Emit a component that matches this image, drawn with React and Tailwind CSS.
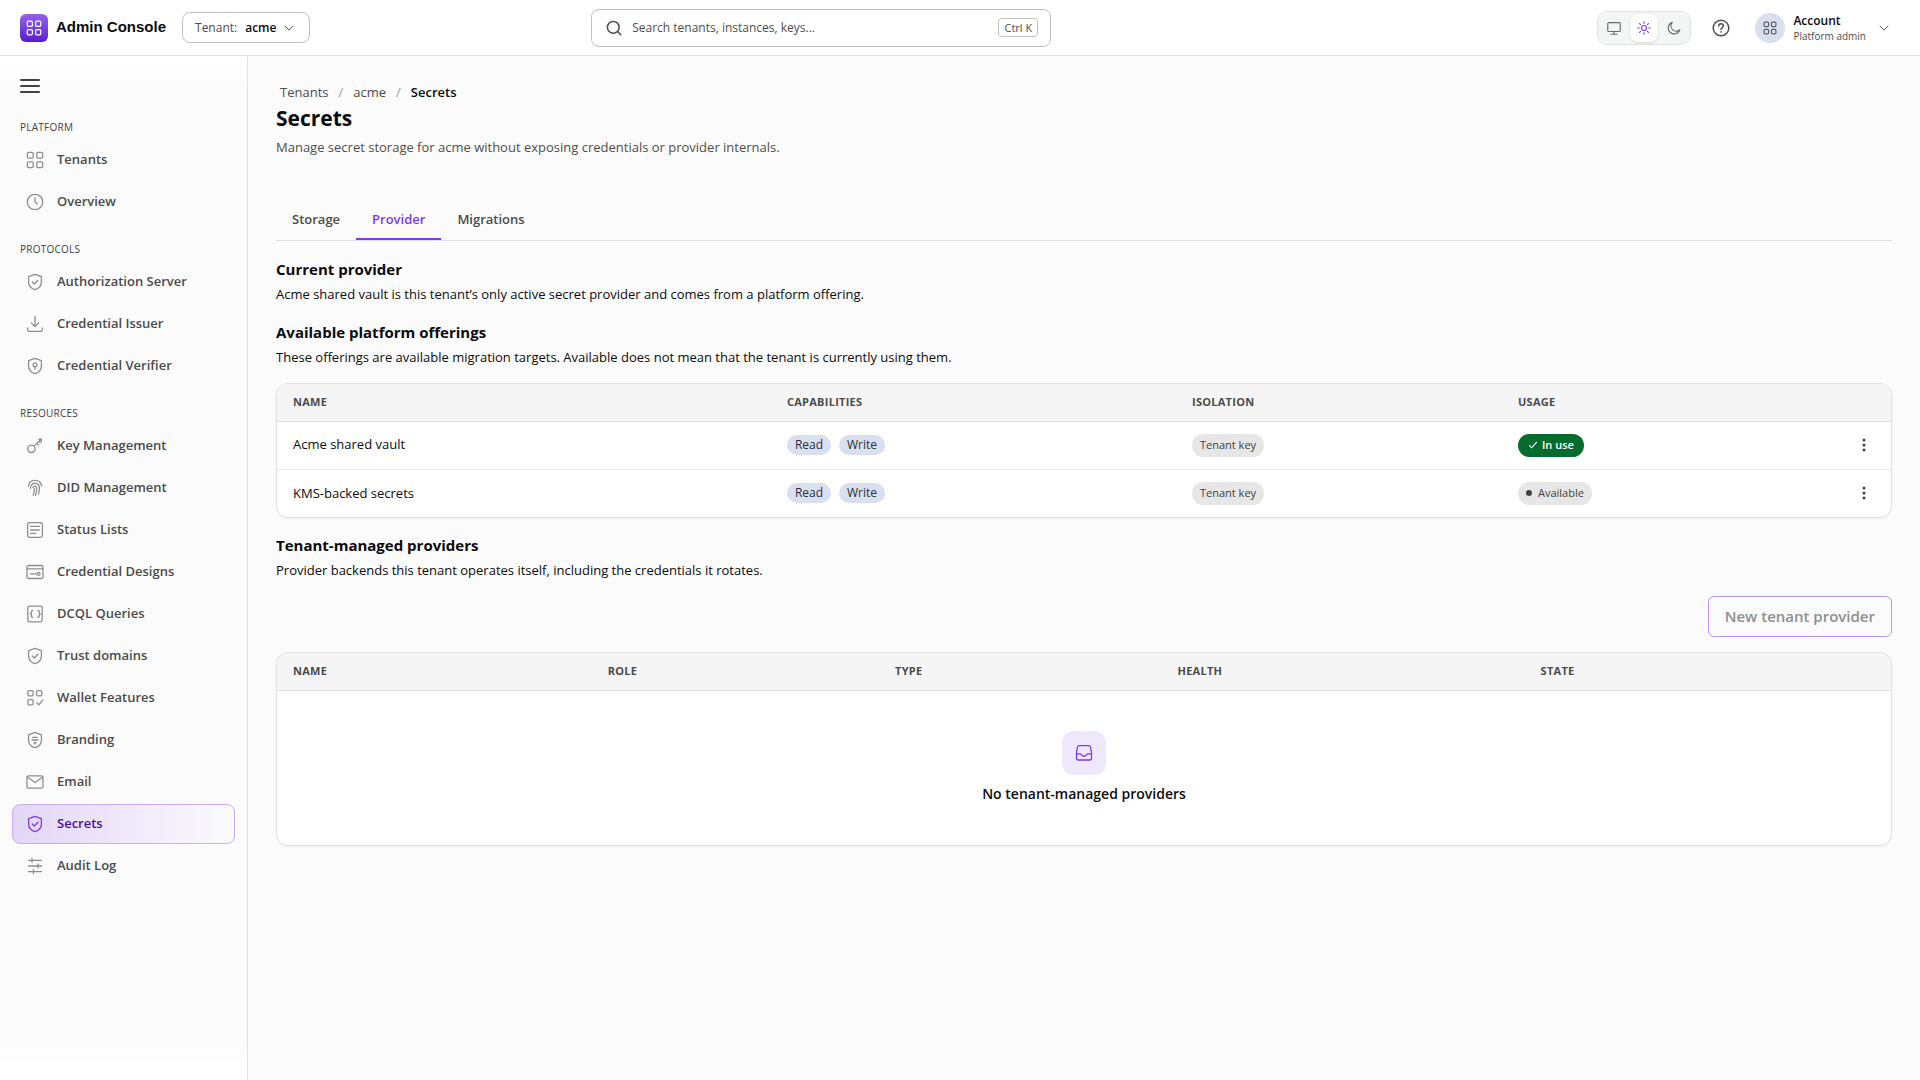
import React, { useState } from "react";

const icons = {
  grid: (
    <>
      <rect x="1.4" y="1.4" width="5.8" height="5.8" rx="1.4" />
      <rect x="10.8" y="1.4" width="5.8" height="5.8" rx="1.4" />
      <rect x="1.4" y="10.8" width="5.8" height="5.8" rx="1.4" />
      <rect x="10.8" y="10.8" width="5.8" height="5.8" rx="1.4" />
    </>
  ),
  clock: (
    <>
      <circle cx="9" cy="9" r="7.7" />
      <path d="M9 4.6V9l2.4 1.8" />
    </>
  ),
  shieldCheck: (
    <>
      <path d="M9 1.3 15.4 3.6V9c0 3.8-2.7 6.5-6.4 7.7C5.3 15.5 2.6 12.8 2.6 9V3.6Z" />
      <path d="m6.3 9 2 2 3.6-3.7" />
    </>
  ),
  download: (
    <>
      <path d="M9 1.5v10M5.4 8 9 11.6 12.6 8" />
      <path d="M1.7 13v1.7c0 1.1.6 1.6 1.6 1.6h11.4c1 0 1.6-.5 1.6-1.6V13" />
    </>
  ),
  shieldKey: (
    <>
      <path d="M9 1.3 15.4 3.6V9c0 3.8-2.7 6.5-6.4 7.7C5.3 15.5 2.6 12.8 2.6 9V3.6Z" />
      <circle cx="9" cy="7.8" r="1.9" />
      <path d="M9 9.8v2.4" />
    </>
  ),
  key: (
    <>
      <circle cx="5.4" cy="11.8" r="3.7" />
      <path d="m8.1 9.1 6.8-6.7M12.8 2.2h2.6v2.6M11 6.2l1.5 1.5M13 4.3l1.3 1.3" />
    </>
  ),
  fingerprint: (
    <>
      <path d="M2.4 7C3 3.600 5.600 1.300 9 1.300s6 2.300 6.600 5.700" />
      <path d="M4.300 9.400C4.600 6.200 6.300 4.300 9 4.300c2.700 0 4.400 1.900 4.400 4.700 0 2.300-.3 4.100-.9 6" />
      <path d="M7 8.500c.1-.9.900-1.400 1.900-1.400 1.200 0 1.800.8 1.800 2 0 2.900-.4 5.100-1.200 7.400M8.300 9.500c.2 2.500-.2 4.700-1.200 6.700" />
    </>
  ),
  list: (
    <>
      <rect x="1.6" y="1.6" width="14.8" height="14.8" rx="1.8" />
      <path d="M4.6 5.4h8.8M4.6 9h8.8M4.6 12.4h5.4" />
    </>
  ),
  card: (
    <>
      <rect x="1" y="2.5" width="16" height="13" rx="1.8" />
      <path d="M1 5.8h16M4.5 10.8h5.5" />
      <circle cx="12.5" cy="10.8" r="1.5" />
    </>
  ),
  braces: (
    <>
      <rect x="1.8" y="1.2" width="14.4" height="15.6" rx="1.8" />
      <path d="M6.7 5.5c-1 0-1.3.5-1.3 1.4v.8c0 .8-.3 1.2-1 1.3.7.1 1 .5 1 1.3v.8c0 .9.3 1.4 1.3 1.4M12 5.5c1 0 1.3.5 1.3 1.4v.8c0 .8.3 1.2 1 1.3-.7.1-1 .5-1 1.3v.8c0 .9-.3 1.4-1.3 1.4" />
    </>
  ),
  features: (
    <>
      <rect x="1.9" y="1.6" width="5.2" height="5.2" rx="1.3" />
      <rect x="10.6" y="1.6" width="5.2" height="5.2" rx="1.3" />
      <rect x="1.9" y="10.6" width="5.2" height="5.2" rx="1.3" />
      <path d="m10.7 13.8 2 2 4.2-4.9" />
    </>
  ),
  badge: (
    <>
      <path d="M9 1.3 15.4 3.9V9.4c0 3.6-2.7 6.2-6.4 7.3C5.3 15.6 2.6 13 2.6 9.4V3.9Z" />
      <path d="M6.6 6.3h4.800M6 9h6M8 12h2M9 11v2" />
    </>
  ),
  mail: (
    <>
      <rect x="1" y="2.8" width="16" height="12.4" rx="1.5" />
      <path d="m1.6 4.2 7.4 5.3 7.4-5.3" />
    </>
  ),
  sliders: (
    <path d="M2.5 3.3h13M2.5 9h13M2.5 14.7h13M6 1.3v4M12 7v4M7.4 12.7v4" />
  ),
  inbox: (
    <>
      <path d="M4.4 1.7h9.200c1.200 0 1.800.7 2 1.800l.9 5v5.500c0 1.300-.7 2-2 2H3.500c-1.300 0-2-.7-2-2V8.500l.9-5c.2-1.100.8-1.800 2-1.800Z" />
      <path d="M1.500 9.800h3.800c.6 0 .8.400 1.100 1 .4.800 1 1.200 1.800 1.200h1.600c.8 0 1.400-.4 1.800-1.200.3-.6.500-1 1.100-1h3.800" />
    </>
  ),
  search: (
    <>
      <circle cx="8.2" cy="8.2" r="6.6" />
      <path d="m13 13 3.6 3.6" />
    </>
  ),
  monitor: (
    <>
      <rect x="1" y="2" width="16" height="11.5" rx="1.4" />
      <path d="M9 13.5V17M5 17h8" />
    </>
  ),
  sun: (
    <>
      <circle cx="9" cy="9" r="3.2" />
      <path d="M9 1v1.8M9 15.2V17M1 9h1.8M15.2 9H17M3.3 3.3l1.3 1.3M13.4 13.4l1.3 1.3M3.3 14.7l1.3-1.3M13.4 4.6l1.3-1.3" />
    </>
  ),
  moon: <path d="M6.8 1.8A7.6 7.6 0 1 0 16.5 11.3 6.8 6.8 0 0 1 6.8 1.8Z" />,
  help: (
    <>
      <circle cx="9" cy="9" r="7.8" />
      <path d="M6.7 7.1C6.7 5.7 7.7 4.8 9 4.8s2.3.9 2.3 2.1c0 1.7-2.3 1.8-2.3 3.5M9 12.8v.3" />
    </>
  ),
  chevron: <path d="m3 6.2 6 6 6-6" />,
  check: <path d="m2.5 9.8 4 4.2 9-10" />,
};

function Icon({ name, className = "size-[18px]", stroke = 1.3 }) {
  return (
    <svg
      viewBox="0 0 18 18"
      fill="none"
      stroke="currentColor"
      strokeWidth={stroke}
      strokeLinecap="round"
      strokeLinejoin="round"
      className={`shrink-0 ${className}`}
      aria-hidden="true"
    >
      {icons[name]}
    </svg>
  );
}

const navSections = [
  {
    title: "Platform",
    items: [
      ["Tenants", "grid"],
      ["Overview", "clock"],
    ],
  },
  {
    title: "Protocols",
    items: [
      ["Authorization Server", "shieldCheck"],
      ["Credential Issuer", "download"],
      ["Credential Verifier", "shieldKey"],
    ],
  },
  {
    title: "Resources",
    items: [
      ["Key Management", "key"],
      ["DID Management", "fingerprint"],
      ["Status Lists", "list"],
      ["Credential Designs", "card"],
      ["DCQL Queries", "braces"],
      ["Trust domains", "shieldCheck"],
      ["Wallet Features", "features"],
      ["Branding", "badge"],
      ["Email", "mail"],
      ["Secrets", "shieldCheck"],
      ["Audit Log", "sliders"],
    ],
  },
];

const offerings = [
  { name: "Acme shared vault", inUse: true },
  { name: "KMS-backed secrets", inUse: false },
];

function Header() {
  const [theme, setTheme] = useState("Light");
  const themes = [
    ["System", "monitor"],
    ["Light", "sun"],
    ["Dark", "moon"],
  ];

  return (
    <header className="grid h-14 grid-cols-[2fr_460px_3fr] items-center gap-4 border-b border-[#e0e0e0] bg-white px-5">
      <div className="flex items-center">
        <span className="flex size-7 items-center justify-center rounded-md bg-linear-to-b from-[#9560ee] to-[#5b14d0] text-white">
          <Icon name="grid" className="size-4" stroke={1.4} />
        </span>
        <span className="ml-2 font-['Liberation_Sans',sans-serif] text-[15px] font-bold whitespace-nowrap">
          Admin Console
        </span>
        <div className="relative ml-4 flex h-[31px] items-center rounded-lg border border-[#c2c2c2] pl-3 text-[12px]">
          <label htmlFor="tenant" className="text-[#4f4f4f]">
            Tenant:
          </label>
          <select
            id="tenant"
            className="appearance-none bg-transparent pr-8 pl-2 font-semibold outline-none"
          >
            <option>acme</option>
          </select>
          <Icon
            name="chevron"
            className="pointer-events-none absolute right-3.5 size-3 text-[#4f4f4f]"
            stroke={1.5}
          />
        </div>
      </div>

      <div className="flex h-[38px] items-center rounded-lg border border-[#c2c2c2] px-3">
        <Icon name="search" className="ml-0.5 size-4 text-[#4f4f4f]" stroke={1.7} />
        <input
          type="search"
          aria-label="Search"
          placeholder="Search tenants, instances, keys..."
          className="ml-2.5 min-w-0 flex-1 text-[12px] outline-none placeholder:text-[#4f4f4f]"
        />
        <kbd className="rounded border border-[#c2c2c2] px-[5px] font-['Open_Sans',sans-serif] text-[11px] leading-[17px] text-[#4f4f4f]">
          Ctrl K
        </kbd>
      </div>

      <div className="flex items-center justify-end gap-3">
        <div className="flex gap-0.5 rounded-[10px] border border-[#e2e4e4] bg-[#f4f5f5] p-0.5">
          {themes.map(([label, icon]) => (
            <button
              key={label}
              aria-label={label}
              aria-pressed={theme === label}
              onClick={() => setTheme(label)}
              className={`flex size-7 items-center justify-center rounded-lg ${
                theme === label
                  ? "bg-white text-[#7c3aed] shadow-sm"
                  : "text-[#6b6b6b]"
              }`}
            >
              <Icon name={icon} className="size-3.5" stroke={1.5} />
            </button>
          ))}
        </div>
        <button
          aria-label="Help"
          className="flex size-9 items-center justify-center text-[#4f4f4f]"
        >
          <Icon name="help" stroke={1.5} />
        </button>
        <button className="flex items-center gap-2 pr-2.5 pl-1 text-left">
          <span className="flex size-[30px] items-center justify-center rounded-full bg-[#d9dfee] text-[#5c5f66]">
            <Icon name="grid" className="size-3.5" stroke={1.5} />
          </span>
          <span className="flex flex-col">
            <span className="text-[12px] leading-4 font-semibold">
              Account
            </span>
            <span className="text-[10px] leading-[14px] text-[#4f4f4f]">
              Platform admin
            </span>
          </span>
          <Icon name="chevron" className="ml-1 size-3 text-[#4f4f4f]" stroke={1.5} />
        </button>
      </div>
    </header>
  );
}

function Sidebar() {
  return (
    <aside className="w-[248px] shrink-0 border-r border-[#e0e0e0] bg-[linear-gradient(to_bottom,#fff,#fbfbfb_40px,#fbfbfb_calc(100%-40px),#fff_calc(100%-12px))] px-3 pt-2.5">
      <button
        aria-label="Toggle navigation"
        className="flex h-10 items-center pl-2 text-[#424242]"
      >
        <svg viewBox="0 0 20 14" className="h-3.5 w-5" fill="currentColor">
          <rect width="20" height="2" rx="1" />
          <rect y="6" width="20" height="2" rx="1" />
          <rect y="12" width="20" height="2" rx="1" />
        </svg>
      </button>
      <nav className="mt-2 flex flex-col gap-3.5">
        {navSections.map((section) => (
          <div key={section.title}>
            <h2 className="flex h-[26px] items-center pl-2 text-[10px] font-medium tracking-wide text-[#424242] uppercase">
              {section.title}
            </h2>
            <ul className="flex flex-col gap-0.5">
              {section.items.map(([label, icon]) => {
                const active = label === "Secrets";
                return (
                  <li key={label}>
                    <a
                      href="#"
                      aria-current={active ? "page" : undefined}
                      className={`flex h-10 items-center gap-[13px] rounded-lg border px-[13px] text-[13px] font-semibold ${
                        active
                          ? "border-[#c9aef5] bg-linear-to-r from-[#e2d6f7] to-[#fbfbfb] text-[#4a0fa8]"
                          : "border-transparent text-[#4b4b4b]"
                      }`}
                    >
                      <span className={active ? "text-[#7c3aed]" : "text-[#8f8f8f]"}>
                        <Icon name={icon} />
                      </span>
                      <span className="whitespace-nowrap">{label}</span>
                    </a>
                  </li>
                );
              })}
            </ul>
          </div>
        ))}
      </nav>
    </aside>
  );
}

function SectionIntro({ title, children }) {
  return (
    <div>
      <h2 className="text-[15px] leading-6 font-bold">{title}</h2>
      <p className="mt-0.5 text-[13px] leading-[22px]">{children}</p>
    </div>
  );
}

function Th({ className = "", children }) {
  return (
    <th
      scope="col"
      className={`px-4 text-left text-[11px] font-bold tracking-wide text-[#4b4b4b] uppercase ${className}`}
    >
      {children}
    </th>
  );
}

function OfferingsTable() {
  return (
    <div className="overflow-hidden rounded-xl border border-[#e0e0e0] bg-white shadow-xs">
      <table className="w-full table-fixed text-[13px]">
        <thead>
          <tr className="h-[37px] border-b border-[#e0e0e0] bg-[#f5f5f5]">
            <Th className="w-[30.6%]">Name</Th>
            <Th className="w-[25.1%]">Capabilities</Th>
            <Th className="w-[20.2%]">Isolation</Th>
            <Th>Usage</Th>
            <td className="w-[55px]" />
          </tr>
        </thead>
        <tbody>
          {offerings.map(({ name, inUse }) => (
            <tr
              key={name}
              className="h-12 border-b border-[#ebebeb] last:border-b-0"
            >
              <td className="px-4">{name}</td>
              <td className="px-4">
                <div className="flex gap-2 text-[12px] leading-5 font-medium text-[#2b2f3f]">
                  <span className="rounded-full bg-[#d9dfee] px-2">Read</span>
                  <span className="rounded-full bg-[#d9dfee] px-2">Write</span>
                </div>
              </td>
              <td className="px-4">
                <span className="flex h-[23px] w-fit items-center rounded-full bg-[#e6e6e6] px-2 text-[11px] text-[#424242]">
                  Tenant key
                </span>
              </td>
              <td className="px-4">
                {inUse ? (
                  <span className="flex h-[23px] w-fit items-center gap-1 rounded-full bg-[#046c2c] px-2.5 text-[11px] font-semibold text-white">
                    <Icon name="check" className="size-2.5" stroke={2} />
                    In use
                  </span>
                ) : (
                  <span className="flex h-[23px] w-fit items-center gap-1.5 rounded-full bg-[#e6e6e6] px-2 text-[11px] text-[#424242]">
                    <span className="size-1.5 rounded-full bg-current" />
                    Available
                  </span>
                )}
              </td>
              <td className="px-4">
                <button
                  aria-label={`Actions for ${name}`}
                  className="flex size-6 items-center justify-center text-[#424242]"
                >
                  <svg viewBox="0 0 4 14" className="h-3.5 w-1" fill="currentColor">
                    <circle cx="2" cy="2" r="1.5" />
                    <circle cx="2" cy="7" r="1.5" />
                    <circle cx="2" cy="12" r="1.5" />
                  </svg>
                </button>
              </td>
            </tr>
          ))}
        </tbody>
      </table>
    </div>
  );
}

function ProvidersTable() {
  return (
    <div className="overflow-hidden rounded-xl border border-[#e0e0e0] bg-white shadow-xs">
      <table className="w-full table-fixed">
        <thead>
          <tr className="h-[37px] border-b border-[#e0e0e0] bg-[#f5f5f5]">
            <Th className="w-[19.5%]">Name</Th>
            <Th className="w-[17.8%]">Role</Th>
            <Th className="w-[17.5%]">Type</Th>
            <Th className="w-[22.5%]">Health</Th>
            <Th>State</Th>
          </tr>
        </thead>
        <tbody>
          <tr>
            <td colSpan={5}>
              <div className="flex flex-col items-center gap-2 py-10">
                <span className="flex size-11 items-center justify-center rounded-xl bg-[#efe7fc] text-[#7c3aed]">
                  <Icon name="inbox" />
                </span>
                <p className="text-[14px] leading-[22px] font-semibold">
                  No tenant-managed providers
                </p>
              </div>
            </td>
          </tr>
        </tbody>
      </table>
    </div>
  );
}

function App() {
  const [tab, setTab] = useState("Provider");

  return (
    <div className="flex min-h-screen flex-col bg-[#fbfbfb] font-['Open_Sans',sans-serif] text-[#0b0b0f]">
      <Header />
      <div className="flex flex-1">
        <Sidebar />
        <main className="min-w-0 flex-1 px-7 pt-6 pb-10">
          <nav
            aria-label="Breadcrumb"
            className="flex gap-2.5 pl-1 text-[13px] leading-6 font-medium text-[#4b4b4b]"
          >
            <a href="#">Tenants</a>
            <span className="text-[#9a9a9a]">/</span>
            <a href="#">acme</a>
            <span className="text-[#9a9a9a]">/</span>
            <span className="font-semibold text-[#0b0b0f]">Secrets</span>
          </nav>
          <h1 className="text-[21px] leading-7 font-bold">Secrets</h1>
          <p className="mt-1 text-[13px] leading-[22px] text-[#4f4f4f]">
            Manage secret storage for acme without exposing credentials or
            provider internals.
          </p>

          <div role="tablist" className="mt-10 flex border-b border-[#e0e0e0]">
            {["Storage", "Provider", "Migrations"].map((name) => (
              <button
                key={name}
                role="tab"
                aria-selected={tab === name}
                onClick={() => setTab(name)}
                className={`h-[42px] border-b-2 px-4 pt-1 text-[13px] font-semibold ${
                  tab === name
                    ? "border-[#7c3aed] text-[#7c3aed]"
                    : "border-transparent text-[#4b4b4b]"
                }`}
              >
                {name}
              </button>
            ))}
          </div>

          <div className="flex flex-col gap-[15px] pt-4">
            <SectionIntro title="Current provider">
              Acme shared vault is this tenant’s only active secret provider and
              comes from a platform offering.
            </SectionIntro>
            <SectionIntro title="Available platform offerings">
              These offerings are available migration targets. Available does
              not mean that the tenant is currently using them.
            </SectionIntro>
            <OfferingsTable />
            <SectionIntro title="Tenant-managed providers">
              Provider backends this tenant operates itself, including the
              credentials it rotates.
            </SectionIntro>
            <button
              disabled
              className="h-[41px] self-end rounded-md border border-[#b794f0] px-4 text-[15px] font-semibold text-[#8f8f8f]"
            >
              New tenant provider
            </button>
            <ProvidersTable />
          </div>
        </main>
      </div>
    </div>
  );
}

export default App;
